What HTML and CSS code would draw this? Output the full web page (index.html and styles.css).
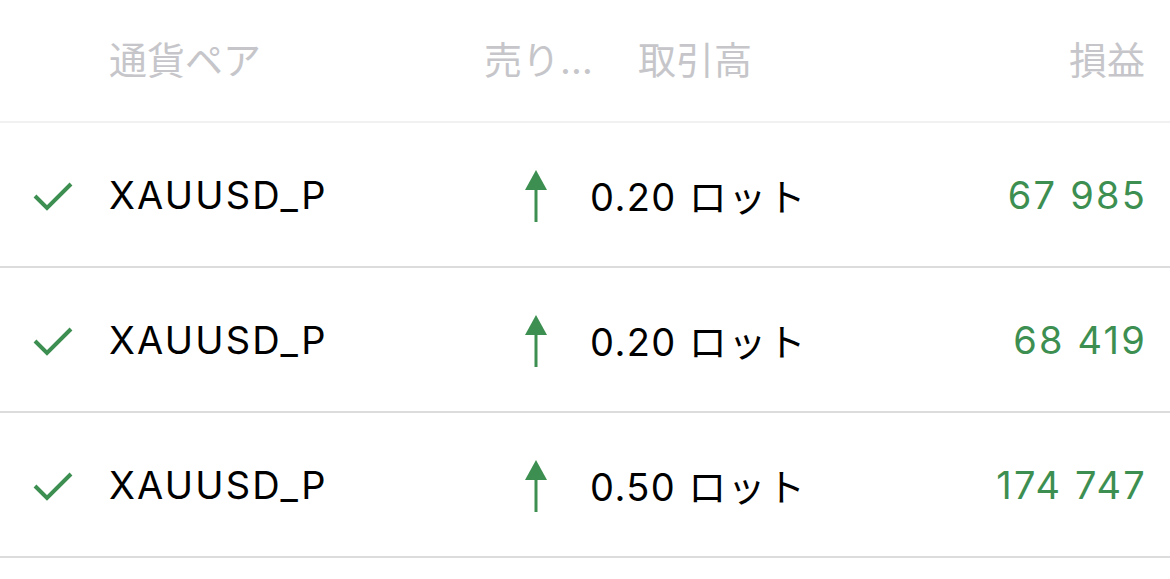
FILE: index.html
```html
<!DOCTYPE html>
<html>
  <head>
    <title>取引履歴</title>
    <link rel="stylesheet" href="styles.css">
  </head>
  <body>
    <div class="table">
      <div class="row head">
        <div class="cell"></div>
        <div class="cell">通貨ペア</div>
        <div class="cell type-head">売り…</div>
        <div class="cell vol-head">取引高</div>
        <div class="cell profit-head">損益</div>
      </div>

      <div class="row">
        <div class="cell check">
          <svg width="42" height="34" viewBox="0 0 42 34"><path d="M3 17 L15 29 L39 5" fill="none" stroke="#3d8f51" stroke-width="4"/></svg>
        </div>
        <div class="cell symbol">XAUUSD_P</div>
        <div class="cell type">
          <svg width="24" height="52" viewBox="0 0 24 52"><path d="M12 0 L23 20 L1 20 Z" fill="#3d8f51"/><rect x="10.5" y="18" width="3" height="34" fill="#3d8f51"/></svg>
        </div>
        <div class="cell volume">0.20 ロット</div>
        <div class="cell profit">67 985</div>
      </div>

      <div class="row">
        <div class="cell check">
          <svg width="42" height="34" viewBox="0 0 42 34"><path d="M3 17 L15 29 L39 5" fill="none" stroke="#3d8f51" stroke-width="4"/></svg>
        </div>
        <div class="cell symbol">XAUUSD_P</div>
        <div class="cell type">
          <svg width="24" height="52" viewBox="0 0 24 52"><path d="M12 0 L23 20 L1 20 Z" fill="#3d8f51"/><rect x="10.5" y="18" width="3" height="34" fill="#3d8f51"/></svg>
        </div>
        <div class="cell volume">0.20 ロット</div>
        <div class="cell profit">68 419</div>
      </div>

      <div class="row">
        <div class="cell check">
          <svg width="42" height="34" viewBox="0 0 42 34"><path d="M3 17 L15 29 L39 5" fill="none" stroke="#3d8f51" stroke-width="4"/></svg>
        </div>
        <div class="cell symbol">XAUUSD_P</div>
        <div class="cell type">
          <svg width="24" height="52" viewBox="0 0 24 52"><path d="M12 0 L23 20 L1 20 Z" fill="#3d8f51"/><rect x="10.5" y="18" width="3" height="34" fill="#3d8f51"/></svg>
        </div>
        <div class="cell volume">0.50 ロット</div>
        <div class="cell profit">174 747</div>
      </div>
    </div>
  </body>
</html>
```

FILE: styles.css
```css
body {
  margin: 0;
  background-color: #fff;
  font-family: Inter, "Noto Sans CJK JP", sans-serif;
  color: #000;
}

.table {
  display: flex;
  flex-direction: column;
}

.row {
  display: grid;
  grid-template-columns: 109px 375px 106px 1fr auto;
  align-items: center;
  height: 143px;
  border-bottom: 2px solid #dcdcdc;
  padding-right: 25px;
  font-size: 38px;
  letter-spacing: 2.2px;
}

.row.head {
  height: 123px;
  border-bottom-color: #f1f1f1;
  color: #c6c6ca;
  font-size: 38px;
  letter-spacing: 0;
  padding-bottom: 6px;
  box-sizing: border-box;
}

.cell {
  white-space: nowrap;
}

.check {
  display: flex;
  padding-left: 32px;
  padding-top: 2px;
}

.type {
  display: flex;
  justify-content: center;
  padding-top: 2px;
  padding-right: 2px;
}

.vol-head {
  padding-left: 48px;
}

.volume {
  letter-spacing: 1.4px;
}

.profit,
.profit-head {
  text-align: right;
}

.profit {
  color: #3d8f51;
  margin-right: -2px;
}
```
